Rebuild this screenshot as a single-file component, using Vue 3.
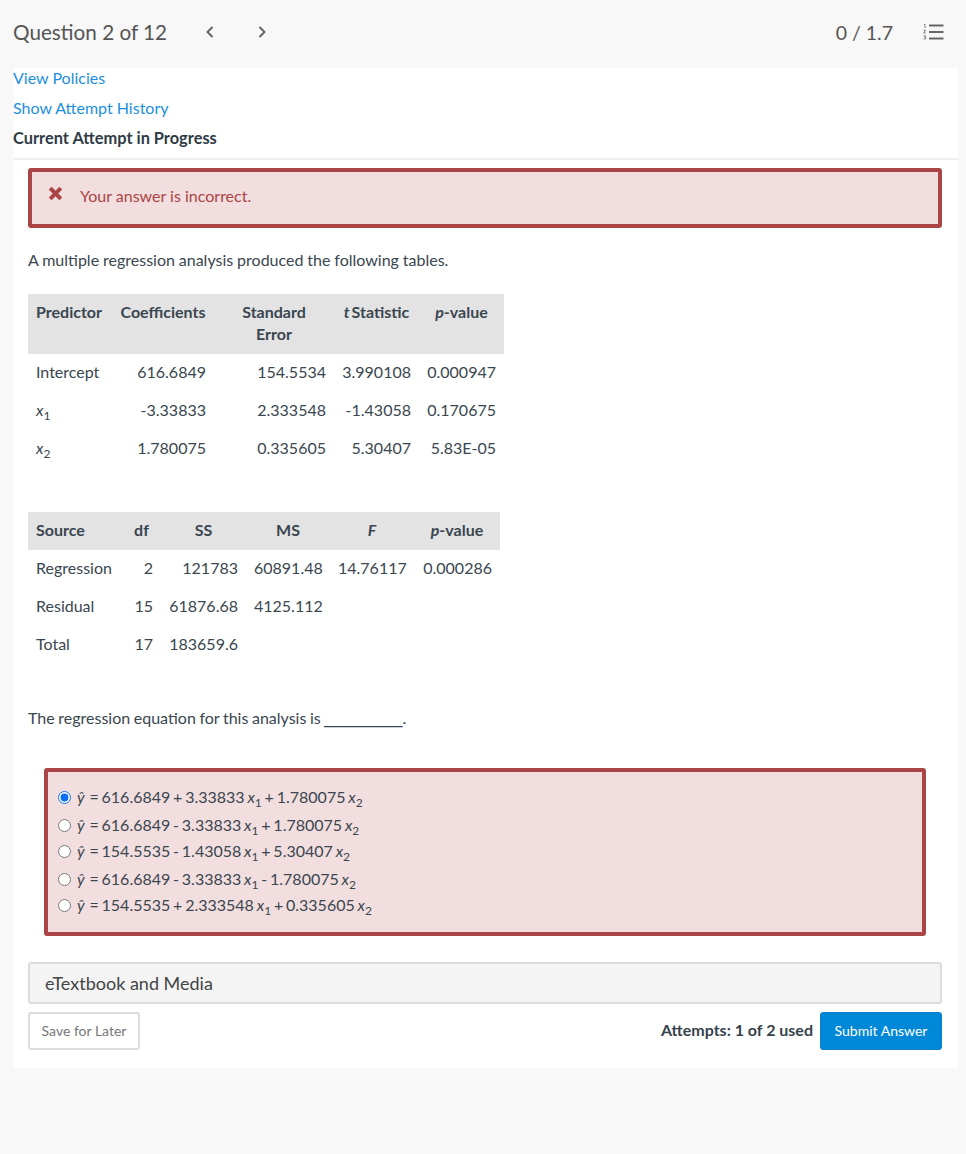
<script setup>
const coefRows = [
  { name: 'Intercept', coef: '616.6849', err: '154.5534', t: '3.990108', p: '0.000947' },
  { name: 'x', sub: '1', coef: '-3.33833', err: '2.333548', t: '-1.43058', p: '0.170675' },
  { name: 'x', sub: '2', coef: '1.780075', err: '0.335605', t: '5.30407', p: '5.83E-05' },
]

const anovaRows = [
  { name: 'Regression', df: '2', ss: '121783', ms: '60891.48', f: '14.76117', p: '0.000286' },
  { name: 'Residual', df: '15', ss: '61876.68', ms: '4125.112', f: '', p: '' },
  { name: 'Total', df: '17', ss: '183659.6', ms: '', f: '', p: '' },
]

const answers = [
  ['616.6849 + 3.33833', '+ 1.780075'],
  ['616.6849 - 3.33833', '+ 1.780075'],
  ['154.5535 - 1.43058', '+ 5.30407'],
  ['616.6849 - 3.33833', '- 1.780075'],
  ['154.5535 + 2.333548', '+ 0.335605'],
]
</script>

<template>
  <div class="page">
    <header class="topbar">
      <div class="topbar__nav">
        <h1 class="topbar__title">Question 2 of 12</h1>
        <svg class="chevron chevron--prev" width="10" height="14" viewBox="0 0 10 14">
          <path d="M7.5 2 L2.5 7 L7.5 12" />
        </svg>
        <svg class="chevron chevron--next" width="10" height="14" viewBox="0 0 10 14">
          <path d="M2.5 2 L7.5 7 L2.5 12" />
        </svg>
      </div>
      <div class="topbar__right">
        <span class="topbar__score">0 / 1.7</span>
        <svg class="list-icon" width="21" height="16" viewBox="0 0 21 16">
          <path class="list-icon__lines" d="M6 1.5 H20.5 M6 8 H20.5 M6 14.5 H20.5" />
          <path class="list-icon__nums" d="M1 0.8 L2 0.4 V4 M0.6 6.2 H2.6 L0.6 9 H2.8 M0.6 11.8 H2.6 L1.4 13.2 H2.6 V15 H0.6" />
        </svg>
      </div>
    </header>

    <main class="card">
      <div class="links">
        <a href="#" class="links__item">View Policies</a>
        <a href="#" class="links__item">Show Attempt History</a>
        <div class="links__current">Current Attempt in Progress</div>
      </div>

      <div class="content">
        <div class="alert">
          <svg class="alert__icon" width="15" height="15" viewBox="0 0 15 15">
            <path d="M2.2 2.2 L12.8 12.8 M12.8 2.2 L2.2 12.8" />
          </svg>
          <span>Your answer is incorrect.</span>
        </div>

        <p class="intro">A multiple regression analysis produced the following tables.</p>

        <table class="stats stats--coef">
          <thead>
            <tr>
              <th class="left w-84">Predictor</th>
              <th class="w-102">Coefficients</th>
              <th class="w-120">Standard<br />Error</th>
              <th class="w-85 tight"><i>t</i> Statistic</th>
              <th class="w-85"><i>p</i>-value</th>
            </tr>
          </thead>
          <tbody>
            <tr v-for="row in coefRows" :key="row.name + row.sub">
              <td class="left">
                <i v-if="row.sub">{{ row.name }}<sub>{{ row.sub }}</sub></i>
                <template v-else>{{ row.name }}</template>
              </td>
              <td>{{ row.coef }}</td>
              <td>{{ row.err }}</td>
              <td>{{ row.t }}</td>
              <td>{{ row.p }}</td>
            </tr>
          </tbody>
        </table>

        <table class="stats stats--anova">
          <thead>
            <tr>
              <th class="left w-94">Source</th>
              <th class="w-39">df</th>
              <th class="w-85">SS</th>
              <th class="w-84">MS</th>
              <th class="w-84"><i>F</i></th>
              <th class="w-86"><i>p</i>-value</th>
            </tr>
          </thead>
          <tbody>
            <tr v-for="row in anovaRows" :key="row.name">
              <td class="left">{{ row.name }}</td>
              <td>{{ row.df }}</td>
              <td>{{ row.ss }}</td>
              <td>{{ row.ms }}</td>
              <td>{{ row.f }}</td>
              <td>{{ row.p }}</td>
            </tr>
          </tbody>
        </table>

        <p class="equation">The regression equation for this analysis is <span class="equation__blank">_________</span>.</p>

        <div class="answers">
          <label v-for="(answer, i) in answers" :key="i" class="answers__item">
            <input type="radio" name="answer" :checked="i === 0" />
            <span><i class="answers__yhat">ŷ</i> = {{ answer[0] }} <i>x</i><sub>1</sub> {{ answer[1] }} <i>x</i><sub>2</sub></span>
          </label>
        </div>

        <div class="media">eTextbook and Media</div>

        <div class="actions">
          <button class="btn btn--save">Save for Later</button>
          <div class="actions__right">
            <span class="actions__attempts">Attempts: 1 of 2 used</span>
            <button class="btn btn--submit">Submit Answer</button>
          </div>
        </div>
      </div>
    </main>
  </div>
</template>

<style>
body {
  background: #f8f8f8;
}
</style>

<style scoped>
.page {
  min-height: 1154px;
  background: #f8f8f8;
  font-family: Lato, "Open Sans", sans-serif;
  font-size: 16px;
  color: #3a4650;
}

.topbar {
  display: flex;
  align-items: center;
  justify-content: space-between;
  height: 68px;
  padding: 0 22px 4px 13px;
  box-sizing: border-box;
}

.topbar__nav {
  display: flex;
  align-items: center;
}

.topbar__title {
  margin: 0;
  font-size: 20.7px;
  font-weight: 400;
  color: #555;
}

.chevron {
  fill: none;
  stroke: #666;
  stroke-width: 2;
}

.chevron--prev {
  margin-left: 38px;
}

.chevron--next {
  margin-left: 42px;
}

.topbar__right {
  display: flex;
  align-items: center;
  gap: 30px;
}

.topbar__score {
  font-size: 19.5px;
  color: #555;
}

.list-icon {
  fill: none;
}

.list-icon__lines {
  stroke: #666;
  stroke-width: 2;
}

.list-icon__nums {
  stroke: #666;
  stroke-width: 0.8;
}

.card {
  margin: 0 8px 0 14px;
  height: 1000px;
  background: #fff;
}

.links {
  height: 92px;
  box-sizing: border-box;
  border-bottom: 2px solid #eee;
}

.links__item,
.links__current {
  display: block;
  height: 30px;
  margin-left: -1px;
  line-height: 20px;
}

.links__item {
  color: #1c8fe0;
  text-decoration: none;
}

.links__current {
  font-size: 16.4px;
  font-weight: 700;
  color: #2f3b46;
}

.content {
  padding: 8px 16px 0 14px;
}

.alert {
  display: flex;
  align-items: center;
  gap: 17px;
  height: 60px;
  padding: 0 0 6px 16px;
  box-sizing: border-box;
  border: 4px solid #ab4444;
  border-radius: 3px;
  background: #f2dede;
  color: #ab4444;
}

.alert__icon {
  flex: none;
  margin-top: -3px;
  fill: none;
  stroke: #ab4444;
  stroke-width: 4;
}

.intro {
  margin: 22px 0 0;
  line-height: 20px;
  word-spacing: -0.2px;
}

.stats {
  border-collapse: collapse;
  table-layout: fixed;
}

.stats--coef {
  width: 476px;
  margin-top: 24px;
}

.stats--anova {
  width: 472px;
  margin-top: 44px;
}

.stats th {
  padding: 7px 8px 9px;
  box-sizing: border-box;
  background: #e3e3e3;
  font-weight: 700;
  line-height: 22px;
  text-align: center;
  vertical-align: top;
}

.stats th.tight {
  word-spacing: -2px;
}

.stats th.left,
.stats td.left {
  text-align: left;
}

.stats td {
  height: 38px;
  padding: 0 8px 4px;
  box-sizing: border-box;
  text-align: right;
  white-space: nowrap;
}

.stats sub,
.answers sub {
  font-size: 75%;
  font-style: normal;
  line-height: 0;
}

.w-39 { width: 39px; }
.w-84 { width: 84px; }
.w-85 { width: 85px; }
.w-86 { width: 86px; }
.w-94 { width: 94px; }
.w-102 { width: 102px; }
.w-120 { width: 120px; }

.equation {
  margin: 44px 0 0;
  line-height: 20px;
  word-spacing: -0.5px;
}

.equation__blank {
  font-family: "Liberation Sans", sans-serif;
  font-size: 15.6px;
}

.answers {
  display: flex;
  flex-direction: column;
  justify-content: center;
  height: 168px;
  margin: 39px 16px 0;
  padding: 0 10px 2px;
  box-sizing: border-box;
  border: 4px solid #ab4444;
  border-radius: 3px;
  background: #f2dede;
  word-spacing: -1.3px;
}

.answers__item {
  display: flex;
  align-items: center;
  height: 27px;
  gap: 5px;
  line-height: 20px;
}

.answers__item:nth-child(even) {
  margin-top: 1px;
  margin-bottom: -1px;
}

.answers__item input {
  width: 13px;
  height: 13px;
  margin: 0 1px 0 0;
  accent-color: #0a6cf5;
}

.answers__yhat {
  margin-right: 2px;
}

.media {
  height: 42px;
  margin-top: 26px;
  padding-left: 15px;
  box-sizing: border-box;
  border: 2px solid #ddd;
  border-radius: 3px;
  background: #f4f4f4;
  font-size: 18px;
  line-height: 38px;
  color: #444;
}

.actions {
  display: flex;
  align-items: center;
  justify-content: space-between;
  margin-top: 8px;
}

.actions__right {
  display: flex;
  align-items: center;
  gap: 7px;
}

.actions__attempts {
  margin-top: -4px;
  font-size: 16px;
  font-weight: 700;
  color: #36424d;
}

.btn {
  height: 38px;
  padding-bottom: 3px;
  box-sizing: border-box;
  border-radius: 3px;
  font-family: inherit;
  font-size: 14px;
}

.btn--save {
  width: 112px;
  border: 2px solid #ddd;
  background: #fff;
  color: #777;
}

.btn--submit {
  width: 122px;
  border: 1px solid #0a80cc;
  background: #0088d8;
  color: #fff;
}
</style>
